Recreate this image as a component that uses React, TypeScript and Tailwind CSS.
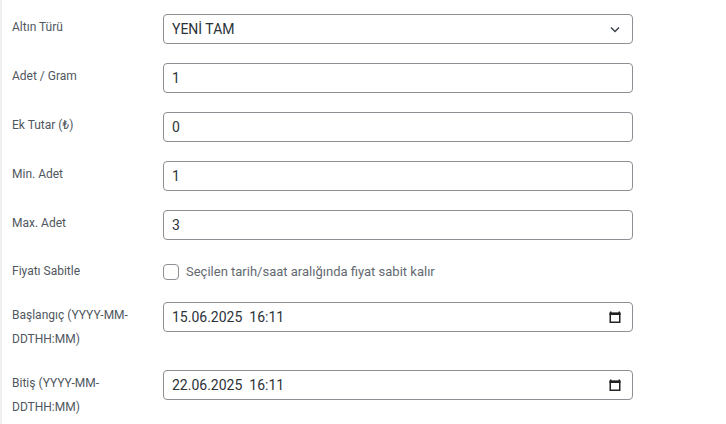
import React from 'react';

const font = { fontFamily: 'Roboto, "Noto Sans", sans-serif' };

function CalendarIcon() {
  return (
    <svg width="12" height="12" viewBox="0 0 12 12" className="shrink-0">
      <rect x="1" y="0.5" width="1.5" height="2" fill="#222" />
      <rect x="9.5" y="0.5" width="1.5" height="2" fill="#222" />
      <rect x="0.5" y="1.5" width="11" height="2.5" fill="#222" />
      <rect x="1.25" y="2.5" width="9.5" height="8.75" fill="none" stroke="#222" strokeWidth="1.5" />
    </svg>
  );
}

function Row({
  label,
  children,
  tight,
}: {
  label: React.ReactNode;
  children: React.ReactNode;
  tight?: boolean;
}) {
  return (
    <div className="grid grid-cols-[151px_470px] items-start">
      <div
        className={
          tight
            ? 'pr-[12px] text-[12px] leading-[24px] text-[#50575e]'
            : 'pt-[1px] pr-[12px] text-[12px] leading-[24px] text-[#50575e]'
        }
      >
        {label}
      </div>
      <div>{children}</div>
    </div>
  );
}

function Field({ value, right }: { value: string; right?: React.ReactNode }) {
  return (
    <div className="flex h-[30px] items-center justify-between rounded-[4px] border border-[#8c8f94] bg-white pl-[8px] pr-[11px] text-[14px] text-[#2c3338]">
      <span className="whitespace-pre">{value}</span>
      {right}
    </div>
  );
}

export default function App() {
  return (
    <div className="min-h-[424px] w-[726px] border-l-2 border-[#f0f0f1] bg-white" style={font}>
      <div className="flex flex-col gap-[19px] pl-[10px] pt-[14px]">
        <Row label="Altın Türü">
          <Field
            value="YENİ TAM"
            right={
              <svg width="10" height="7" viewBox="0 0 10 7" className="mr-[1px]">
                <path d="M1 1.5 L5 5.5 L9 1.5" fill="none" stroke="#3c434a" strokeWidth="1.5" />
              </svg>
            }
          />
        </Row>
        <Row label="Adet / Gram">
          <Field value="1" />
        </Row>
        <Row label="Ek Tutar (₺)">
          <Field value="0" />
        </Row>
        <Row label="Min. Adet">
          <Field value="1" />
        </Row>
        <Row label="Max. Adet">
          <Field value="3" />
        </Row>
        <Row label="Fiyatı Sabitle" tight>
          <label className="flex h-[24px] items-center gap-[7px] pt-[2px] text-[13px] text-[#646970]">
            <span className="h-[16px] w-[16px] rounded-[4px] border border-[#8c8f94] bg-white" />
            <span>Seçilen tarih/saat aralığında fiyat sabit kalır</span>
          </label>
        </Row>
        <Row label="Başlangıç (YYYY-MM-DDTHH:MM)">
          <Field value="15.06.2025  16:11" right={<CalendarIcon />} />
        </Row>
        <Row label="Bitiş (YYYY-MM-DDTHH:MM)">
          <Field value="22.06.2025  16:11" right={<CalendarIcon />} />
        </Row>
      </div>
    </div>
  );
}
